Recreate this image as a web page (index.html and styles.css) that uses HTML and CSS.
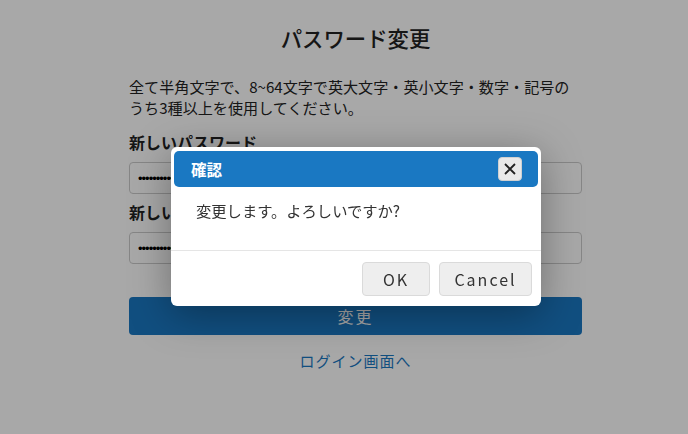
FILE: index.html
```html
<!DOCTYPE html>
<html lang="ja">
<head>
    <meta charset="UTF-8">
    <title>パスワード変更</title>
    <link rel="stylesheet" href="styles.css">
</head>
<body>

    <div class="container">
        <h1>パスワード変更</h1>
        <p class="note">全て半角文字で、8~64文字で英大文字・英小文字・数字・記号のうち3種以上を使用してください。</p>
        <div class="field">
            <label for="pw1">新しいパスワード</label>
            <input type="password" id="pw1" value="password12">
        </div>
        <div class="field">
            <label for="pw2">新しいパスワード（確認）</label>
            <input type="password" id="pw2" value="password12">
        </div>
        <button class="submit-btn">変更</button>
        <a class="back-link" href="#">ログイン画面へ</a>
    </div>

    <div class="overlay"></div>

    <div class="dialog">
        <div class="dialog-title">
            <span>確認</span>
            <button class="close-btn" aria-label="close">
                <svg width="14" height="14" viewBox="0 0 14 14"><path d="M2 2L12 12M12 2L2 12" stroke="#222" stroke-width="1.8" fill="none"/></svg>
            </button>
        </div>
        <div class="dialog-body">変更します。よろしいですか?</div>
        <div class="dialog-buttons">
            <button class="dlg-btn">OK</button>
            <button class="dlg-btn">Cancel</button>
        </div>
    </div>

</body>
</html>
```

FILE: styles.css
```css
:root {
    --primary-color: #1a78c2;
    --text-color: #222;
}
body {
    font-family: "Noto Sans CJK JP", "Noto Sans", sans-serif;
    background-color: #fff;
    color: var(--text-color);
    margin: 0;
}
.container {
    width: 453px;
    margin-left: 129px;
    padding-top: 22px;
    display: flex;
    flex-direction: column;
}
h1 { margin: 0; font-size: 21.4px; font-weight: 500; text-align: center; line-height: 32px; }
.note { margin: 22px 0 0; font-size: 15.1px; line-height: 21px; }
.field { display: flex; flex-direction: column; margin-top: 13px; }
.field + .field { margin-top: 7px; }
label { font-size: 16px; font-weight: bold; line-height: 22px; margin-bottom: 9px; }
input { height: 32px; box-sizing: border-box; border: 1px solid #ccc; border-radius: 4px; padding: 0 8px; font-size: 13px; letter-spacing: -1px; }
.submit-btn { margin-top: 33px; height: 38px; border: none; border-radius: 4px; background-color: var(--primary-color); color: #fff; font-family: inherit; font-size: 16px; letter-spacing: 2px; }
.back-link { margin-top: 15px; text-align: center; color: var(--primary-color); text-decoration: none; font-size: 15px; letter-spacing: 1px; }

.overlay { position: fixed; inset: 0; background: rgba(0, 0, 0, 0.34); }

.dialog {
    position: absolute;
    left: 171px;
    top: 147px;
    width: 370px;
    background: #fff;
    border-radius: 6px;
    box-shadow: 0 8px 40px rgba(0, 0, 0, 0.35);
    padding-top: 4px;
}
.dialog-title {
    margin: 0 3px;
    height: 36px;
    background: var(--primary-color);
    border-radius: 5px;
    color: #fff;
    display: flex;
    align-items: center;
    justify-content: space-between;
    padding: 0 17px;
    font-weight: bold;
    font-size: 15.5px;
}
.close-btn {
    width: 24px;
    height: 24px;
    margin-right: -1px;
    padding: 0;
    border: 1px solid #d0d0d0;
    border-radius: 4px;
    background: #e9e9e9;
    display: flex;
    align-items: center;
    justify-content: center;
}
.dialog-body { padding: 12px 25px 0; height: 51px; font-size: 15.3px; line-height: 22px; color: #333; border-bottom: 1px solid #e5e5e5; }
.dialog-buttons { display: flex; justify-content: flex-end; gap: 9px; padding: 11px 9px 10px; }
.dlg-btn {
    height: 34px;
    border: 1px solid #dadada;
    border-radius: 4px;
    background: #eee;
    color: #333;
    font-family: inherit;
    font-size: 16px;
    letter-spacing: 2px;
}
.dlg-btn:first-child { width: 68px; }
.dlg-btn:last-child { width: 93px; }
```
